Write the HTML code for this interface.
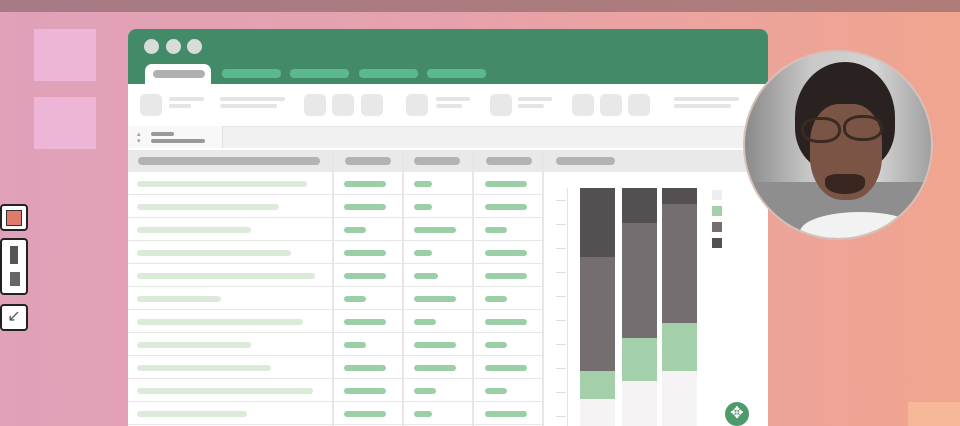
<!DOCTYPE html><html><head><style>
*{margin:0;padding:0;box-sizing:border-box}
html,body{width:960px;height:426px;overflow:hidden}
body{position:relative;background:linear-gradient(90deg,#e0a1b9 0%,#e6a2ad 45%,#f0a58f 100%);font-family:"Liberation Sans",sans-serif}
.a{position:absolute}
.p{position:absolute;border-radius:4px;height:7px}
</style></head><body>
<div class="a" style="left:0;top:0;width:960px;height:12px;background:linear-gradient(90deg,#a77a86,#b07c78)"></div>
<div class="a" style="left:34px;top:29px;width:62px;height:52px;background:#edb6d6"></div>
<div class="a" style="left:34px;top:97px;width:62px;height:52px;background:#edb6d6"></div>
<div class="a" style="left:0;top:204px;width:28px;height:27px;border:2px solid #222;border-radius:4px;background:#fff"><div class="a" style="left:4px;top:4px;width:16px;height:16px;background:#e07a6a;border:1px solid #333"></div></div>
<div class="a" style="left:0;top:238px;width:28px;height:57px;border:2px solid #222;border-radius:4px;background:#fff"><div class="a" style="left:8px;top:6px;width:8px;height:18px;background:#555"></div><div class="a" style="left:8px;top:32px;width:10px;height:14px;background:#666"></div></div>
<div class="a" style="left:0;top:304px;width:28px;height:27px;border:2px solid #222;border-radius:4px;background:#fff;color:#555;font-size:16px;line-height:22px;text-align:center">↙</div>

<div class="a" style="left:128px;top:29px;width:640px;height:397px;background:#fff;border-radius:8px 8px 0 0;overflow:hidden">
 <div class="a" style="left:0;top:0;width:640px;height:55px;background:#438b68"></div>
 <div class="a" style="left:16px;top:10px;width:15px;height:15px;border-radius:50%;background:#d8dcd9"></div>
 <div class="a" style="left:38px;top:10px;width:15px;height:15px;border-radius:50%;background:#d8dcd9"></div>
 <div class="a" style="left:59px;top:10px;width:15px;height:15px;border-radius:50%;background:#d8dcd9"></div>
 <div class="a" style="left:17px;top:35px;width:66px;height:22px;background:#fff;border-radius:7px 7px 0 0"></div>
 <div class="a" style="left:25px;top:41px;width:52px;height:8px;border-radius:4px;background:#b0b0b0"></div>
 <div class="p" style="left:94px;top:40px;width:59px;height:9px;background:#5cb98b"></div>
 <div class="p" style="left:162px;top:40px;width:59px;height:9px;background:#5cb98b"></div>
 <div class="p" style="left:231px;top:40px;width:59px;height:9px;background:#5cb98b"></div>
 <div class="p" style="left:299px;top:40px;width:59px;height:9px;background:#5cb98b"></div>
 <div class="a" style="left:12px;top:65px;width:22px;height:22px;border-radius:5px;background:#e8e8e8"></div>
 <div class="p" style="left:41px;top:68px;width:35px;height:4px;background:#e4e4e4"></div><div class="p" style="left:41px;top:75px;width:22px;height:4px;background:#e4e4e4"></div>
 <div class="p" style="left:92px;top:68px;width:65px;height:4px;background:#e4e4e4"></div><div class="p" style="left:92px;top:75px;width:57px;height:4px;background:#e4e4e4"></div>
 <div class="a" style="left:176px;top:65px;width:22px;height:22px;border-radius:5px;background:#e8e8e8"></div>
 <div class="a" style="left:204px;top:65px;width:22px;height:22px;border-radius:5px;background:#e8e8e8"></div>
 <div class="a" style="left:233px;top:65px;width:22px;height:22px;border-radius:5px;background:#e8e8e8"></div>
 <div class="a" style="left:278px;top:65px;width:22px;height:22px;border-radius:5px;background:#e8e8e8"></div>
 <div class="p" style="left:308px;top:68px;width:34px;height:4px;background:#e4e4e4"></div><div class="p" style="left:308px;top:75px;width:26px;height:4px;background:#e4e4e4"></div>
 <div class="a" style="left:362px;top:65px;width:22px;height:22px;border-radius:5px;background:#e8e8e8"></div>
 <div class="p" style="left:390px;top:68px;width:34px;height:4px;background:#e4e4e4"></div><div class="p" style="left:390px;top:75px;width:26px;height:4px;background:#e4e4e4"></div>
 <div class="a" style="left:444px;top:65px;width:22px;height:22px;border-radius:5px;background:#e8e8e8"></div>
 <div class="a" style="left:472px;top:65px;width:22px;height:22px;border-radius:5px;background:#e8e8e8"></div>
 <div class="a" style="left:500px;top:65px;width:22px;height:22px;border-radius:5px;background:#e8e8e8"></div>
 <div class="p" style="left:546px;top:68px;width:65px;height:4px;background:#e4e4e4"></div><div class="p" style="left:546px;top:75px;width:57px;height:4px;background:#e4e4e4"></div>
 <div class="a" style="left:0;top:97px;width:640px;height:22px;background:#f1f1f1;border-top:1px solid #e6e6e6"></div>
 <div class="a" style="left:0;top:97px;width:95px;height:22px;background:#f8f8f8;border-right:1px solid #e0e0e0"></div>
 <div class="p" style="left:23px;top:103px;width:23px;height:4px;background:#999"></div><div class="p" style="left:23px;top:110px;width:54px;height:4px;background:#999"></div>
 <div class="a" style="left:9px;top:102px;font-size:7px;color:#999;line-height:7px">▴<br>▾</div>
 <div class="a" style="left:0;top:121px;width:640px;height:22px;background:#e9e9e9"></div>
 <div class="p" style="left:10px;top:128px;width:182px;height:8px;background:#b3b3b3"></div>
 <div class="p" style="left:217px;top:128px;width:46px;height:8px;background:#b3b3b3"></div>
 <div class="p" style="left:286px;top:128px;width:46px;height:8px;background:#b3b3b3"></div>
 <div class="p" style="left:358px;top:128px;width:46px;height:8px;background:#b3b3b3"></div>
 <div class="p" style="left:428px;top:128px;width:59px;height:8px;background:#b3b3b3"></div>
 <div class="a" style="left:204px;top:121px;width:2px;height:290px;background:#e6e6e6"></div>
 <div class="a" style="left:274px;top:121px;width:2px;height:290px;background:#e6e6e6"></div>
 <div class="a" style="left:344px;top:121px;width:2px;height:290px;background:#e6e6e6"></div>
 <div class="a" style="left:414px;top:121px;width:2px;height:290px;background:#e6e6e6"></div>
 <div class="a" style="left:439px;top:159px;width:1px;height:250px;background:#e2e2e2"></div>
 <div id="rows"></div>
</div>
<script>
var g=document.getElementById('rows'),h='';
var w1=[170,142,114,154,178,84,166,114,134,176,110],w2=[42,42,22,42,42,22,42,22,42,42,42],w3=[18,18,42,18,24,42,22,42,42,22,18],w4=[42,42,22,42,42,22,42,22,42,22,42];
for(var i=0;i<11;i++){var y=143+i*23;
h+='<div class="a" style="left:0;top:'+(y+22)+'px;width:416px;height:1px;background:#e6e6e6"></div>';
h+='<div class="p" style="left:9px;top:'+(y+9)+'px;width:'+w1[i]+'px;height:6px;background:#dcebd9"></div>';
h+='<div class="p" style="left:216px;top:'+(y+9)+'px;width:'+w2[i]+'px;height:6px;background:#9ccfa5"></div>';
h+='<div class="p" style="left:286px;top:'+(y+9)+'px;width:'+w3[i]+'px;height:6px;background:#9ccfa5"></div>';
h+='<div class="p" style="left:357px;top:'+(y+9)+'px;width:'+w4[i]+'px;height:6px;background:#9ccfa5"></div>';}
for(var k=0;k<10;k++)h+='<div class="a" style="left:428px;top:'+(171+k*24)+'px;width:10px;height:1px;background:#ddd"></div>';
function bar(x,a,b,c){return '<div class="a" style="left:'+x+'px;top:159px;width:35px;height:'+(a-159)+'px;background:#545051"></div><div class="a" style="left:'+x+'px;top:'+a+'px;width:35px;height:'+(b-a)+'px;background:#746e70"></div><div class="a" style="left:'+x+'px;top:'+b+'px;width:35px;height:'+(c-b)+'px;background:#a3d0ab"></div><div class="a" style="left:'+x+'px;top:'+c+'px;width:35px;height:60px;background:#f5f3f3"></div>';}
h+=bar(452,228,342,370)+bar(494,194,309,352)+bar(534,175,294,342);
h+='<div class="a" style="left:584px;top:161px;width:10px;height:10px;background:#eee"></div><div class="a" style="left:584px;top:177px;width:10px;height:10px;background:#a3d0ab"></div><div class="a" style="left:584px;top:193px;width:10px;height:10px;background:#746e70"></div><div class="a" style="left:584px;top:209px;width:10px;height:10px;background:#545051"></div>';
h+='<div class="a" style="left:597px;top:373px;width:24px;height:24px;border-radius:50%;background:#4f9a6c;color:#fff;font-size:16px;line-height:24px;text-align:center">✥</div>';
g.innerHTML=h;
</script>
<div class="a" style="left:908px;top:402px;width:52px;height:24px;background:#f6b898"></div>
<div class="a" style="left:743px;top:50px;width:190px;height:190px;border-radius:50%;overflow:hidden;background:linear-gradient(90deg,#8a8a8a,#c8c8c8 35%,#d4d4d4 70%,#a0a0a0);border:2px solid #d8c0b8">
 <div class="a" style="left:0;top:130px;width:190px;height:60px;background:#8e8e8e"></div>
 <div class="a" style="left:50px;top:10px;width:100px;height:110px;border-radius:50% 50% 40% 40%;background:#2a2220"></div>
 <div class="a" style="left:65px;top:52px;width:72px;height:96px;border-radius:40% 40% 45% 45%;background:#7a5444"></div>
 <div class="a" style="left:56px;top:65px;width:40px;height:26px;border:3px solid #3a2a22;border-radius:45%"></div>
 <div class="a" style="left:98px;top:63px;width:40px;height:26px;border:3px solid #3a2a22;border-radius:45%"></div>
 <div class="a" style="left:80px;top:122px;width:40px;height:20px;border-radius:30% 30% 50% 50%;background:#3a2620"></div>
 <div class="a" style="left:55px;top:160px;width:120px;height:40px;border-radius:50% 50% 0 0;background:#f2f2f2"></div>
</div>
</body></html>
